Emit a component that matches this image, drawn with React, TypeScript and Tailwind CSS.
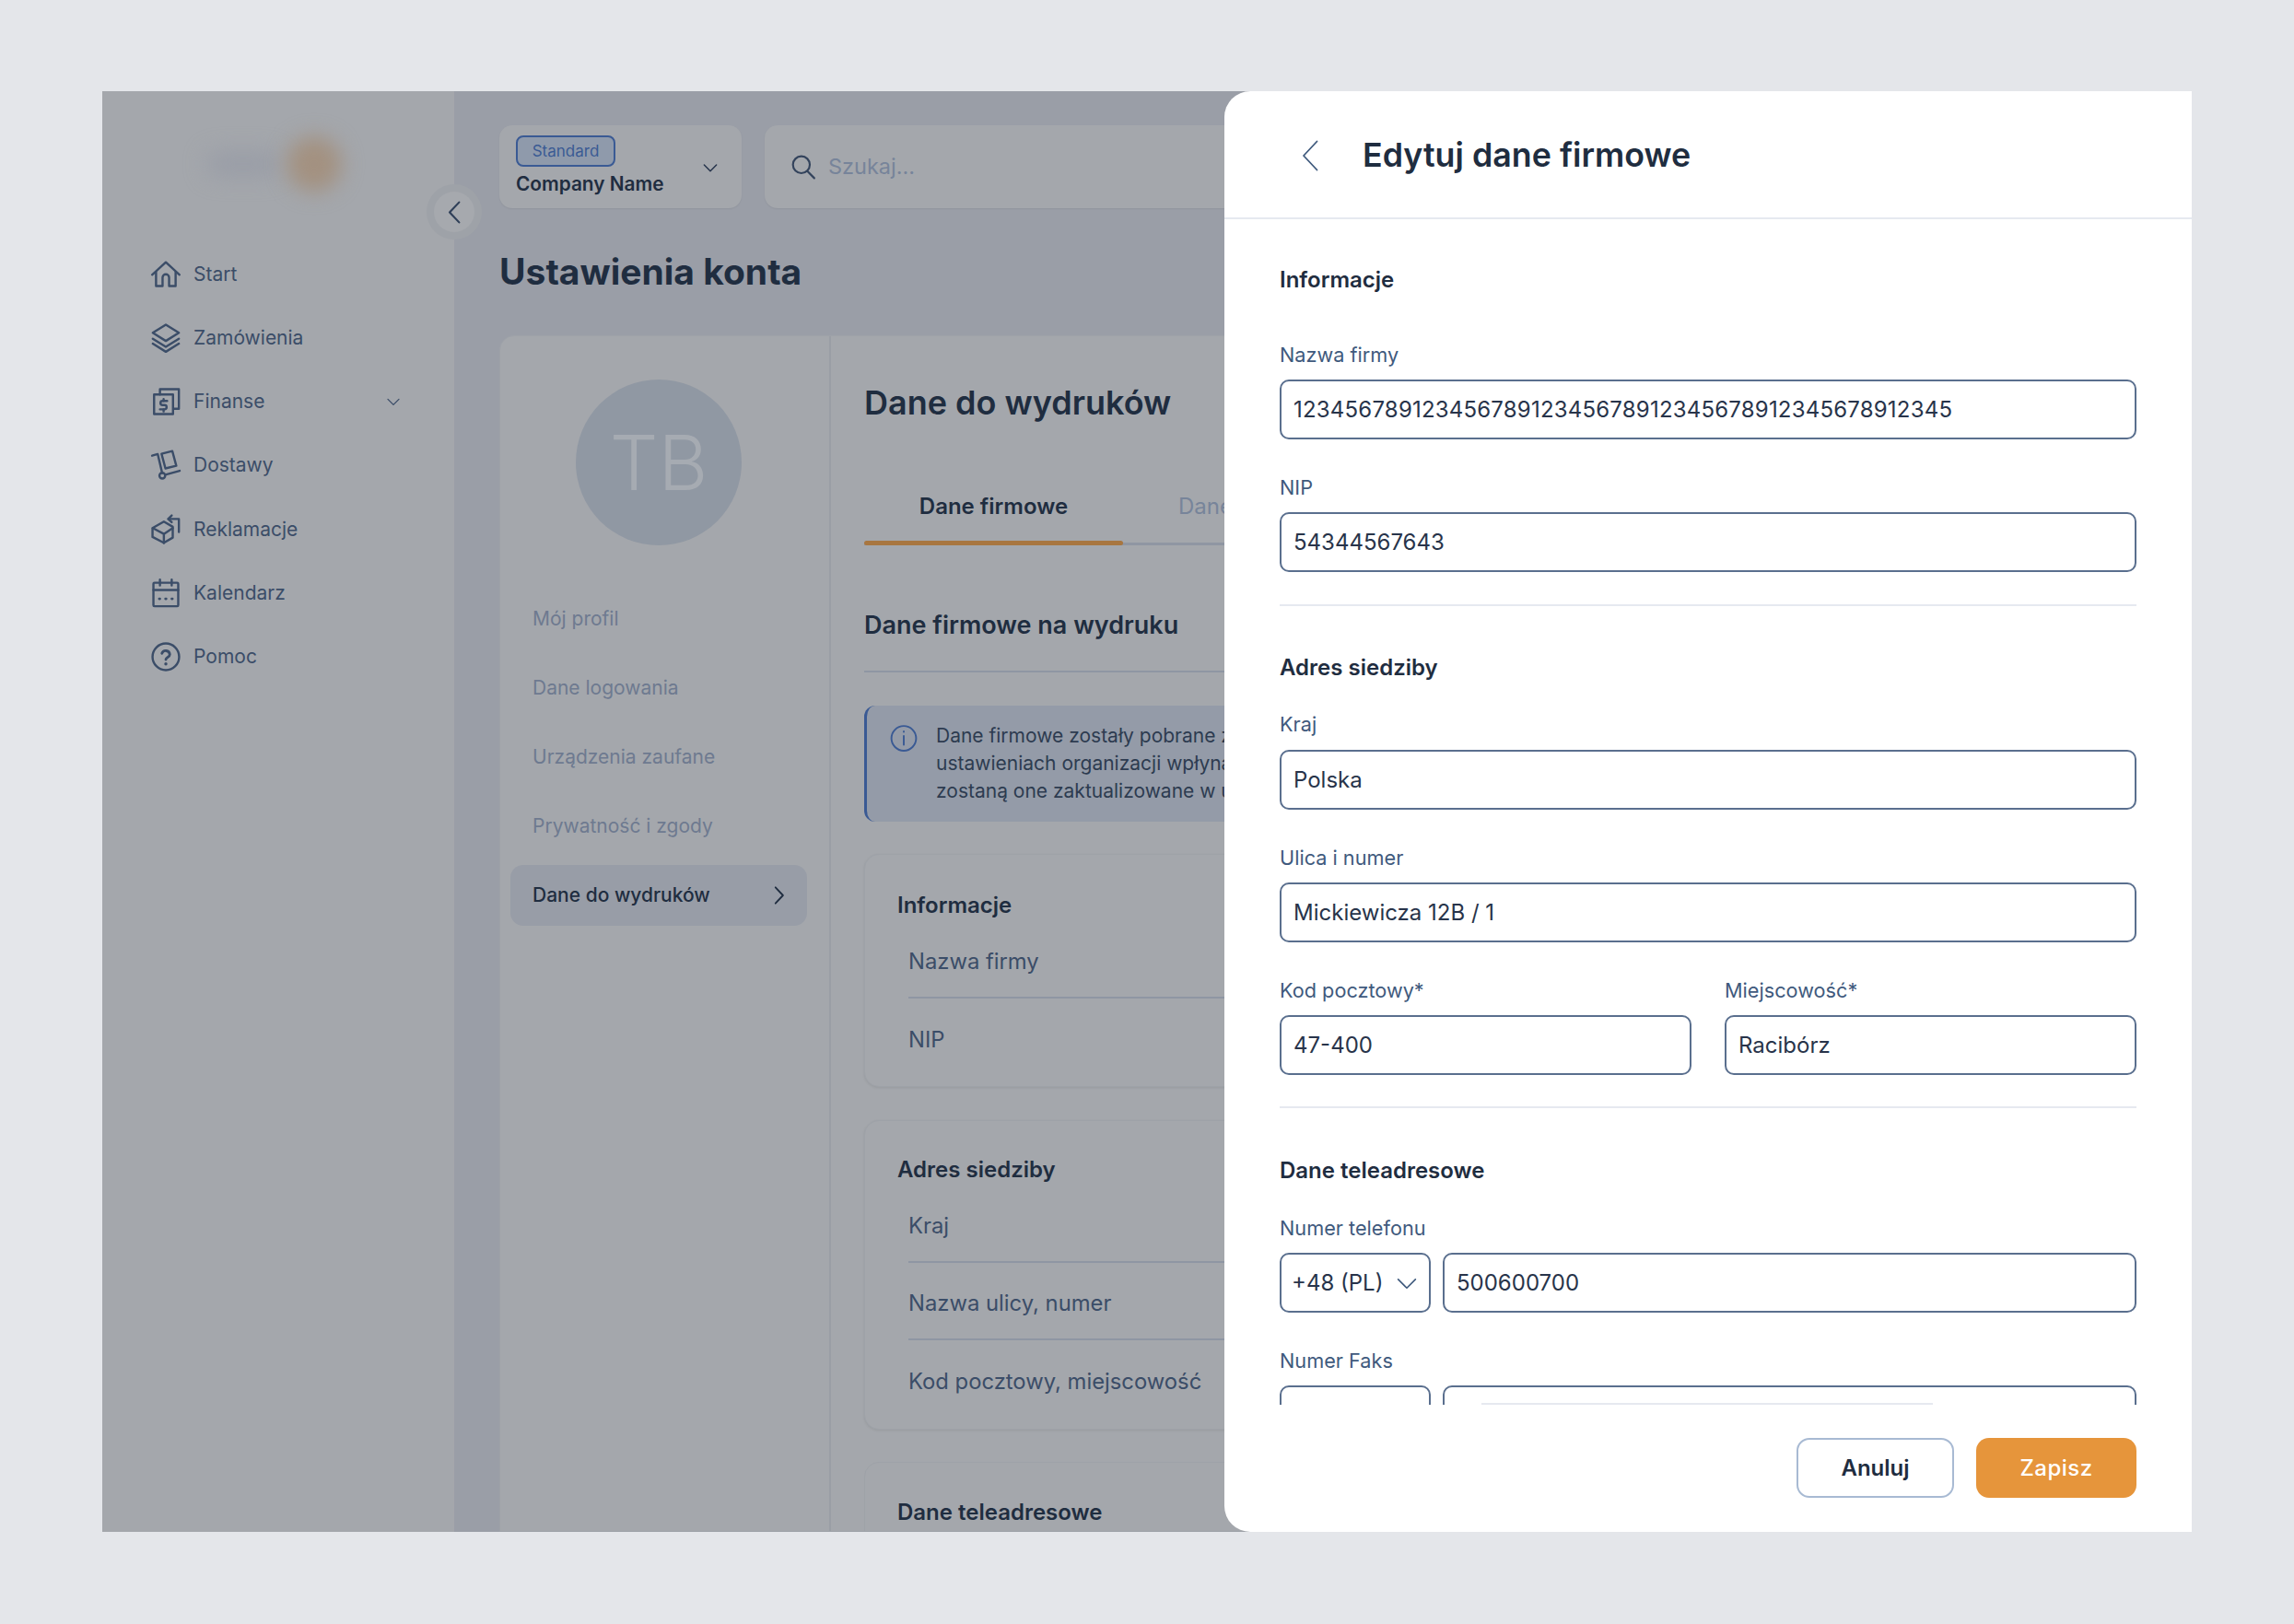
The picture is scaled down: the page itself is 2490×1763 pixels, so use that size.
import React from "react";

const Ico = ({ children, className = "", sw = "1.700" }: { children: React.ReactNode; className?: string; sw?: string }) => (
  <svg viewBox="0 0 24 24" fill="none" stroke="currentColor" strokeWidth={sw} strokeLinecap="round" strokeLinejoin="round" className={className}>
    {children}
  </svg>
);

const size = "w-[34px] h-[34px] shrink-0";

const HomeI = () => (
  <Ico className={size}>
    <path d="M1.5 12.2 12 2.6l10.500 9.600" />
    <path d="M4.500 10.200V20.800h5V14.300a2.500 2.500 0 0 1 5 0v6.500h5V10.200" />
  </Ico>
);
const LayersI = () => (
  <Ico className={size}>
    <path d="M12 1.800 22 8l-10 6.200L2 8z" />
    <path d="M2 12.500l10 6.200 10-6.200" />
    <path d="M2 16.300l10 6.200 10-6.200" />
  </Ico>
);
const FinanceI = () => (
  <Ico className={size}>
    <path d="M7.500 6.500V2.500h14.500v15h-4" />
    <rect x="3" y="6.500" width="14.500" height="15" />
    <path d="M13 11.500h-3.500a1.600 1.600 0 0 0 0 3.200h1.500a1.600 1.600 0 0 1 0 3.200H7.500" />
    <path d="M10.300 10v1.500M10.300 18v1.500" />
  </Ico>
);
const TruckI = () => (
  <Ico className={size}>
    <path d="M1.500 4.700 5.800 3.500 9.200 18" />
    <circle cx="9.300" cy="20" r="2.200" />
    <path d="m11.600 19.300 11-3" />
    <path d="m8.700 3.300 8.300-2.100 3 11.200-8.300 2.100z" />
  </Ico>
);
const BoxI = () => (
  <Ico className={size}>
    <path d="M1.800 12 10.500 7l6.800 4v8.300l-6.800 4-8.700-4.500z" transform="translate(0 -.5)" />
    <path d="m2 11.500 8.500 4.500 6.800-4.500M10.500 16v7" />
    <path d="M14 4.500h8v10" />
    <path d="M16.500 1.800 13.800 4.500 16.500 7" />
  </Ico>
);
const CalI = () => (
  <Ico className={size}>
    <rect x="2.500" y="4" width="19" height="18" rx="0.800" />
    <path d="M2.500 9.500h19M7.500 1.500V6M16.500 1.500V6" />
    <path d="M7 16.300h.4M11.800 16.300h.4M16.600 16.300h.4" strokeWidth="2" />
  </Ico>
);
const HelpI = () => (
  <Ico className={size}>
    <circle cx="12" cy="12" r="10.200" />
    <path d="M9 9.400a3.100 3.100 0 0 1 6 .8c0 2-3 2.500-3 4" strokeWidth="2" />
    <path d="M12 17.500h.01" strokeWidth="2.400" />
  </Ico>
);

const nav: { label: string; icon: React.ReactNode; arrow?: boolean }[] = [
  { label: "Start", icon: <HomeI /> },
  { label: "Zamówienia", icon: <LayersI /> },
  { label: "Finanse", icon: <FinanceI />, arrow: true },
  { label: "Dostawy", icon: <TruckI /> },
  { label: "Reklamacje", icon: <BoxI /> },
  { label: "Kalendarz", icon: <CalI /> },
  { label: "Pomoc", icon: <HelpI /> },
];

const Chevron = ({ dir, className = "", sw }: { dir: "left" | "right" | "down"; className?: string; sw?: string }) => {
  const d = dir === "left" ? "M16 3 7.500 12l8.500 9" : dir === "right" ? "M9 4l7.500 8L9 20" : "M4 8.500l8 8 8-8";
  return (
    <Ico className={className} sw={sw}>
      <path d={d} />
    </Ico>
  );
};

const Sidebar = () => (
  <aside className="w-[382px] shrink-0 bg-[#a4a7ac] text-[#3b4d68]">
    <div className="h-[60px] mt-[49px] mb-[55px] pl-[114px] flex items-center gap-[8px]">
      <div className="w-[78px] h-[24px] rounded-full bg-[#989ca6] blur-[12px]" />
      <div className="w-[60px] h-[60px] rounded-full bg-[#a39180] blur-[11px]" />
    </div>
    <nav className="flex flex-col pl-[53px] pr-[55px]">
      {nav.map((n) => (
        <div key={n.label} className="h-[69.200px] flex items-center">
          <span className="w-[32px] flex justify-center">{n.icon}</span>
          <span className="ml-[14px] text-[21px] flex-1">{n.label}</span>
          {n.arrow && <Chevron dir="down" className="w-[18px] h-[18px] mr-[2px]" />}
        </div>
      ))}
    </nav>
  </aside>
);

const Row = ({ label, line = true }: { label: string; line?: boolean }) => (
  <div className={`h-[84px] pt-[5px] flex items-center text-[23.800px] text-[#3b4d68] ${line ? "border-b-2 border-[#8f96a3]" : ""}`}>{label}</div>
);

const CardTitle = ({ children }: { children: React.ReactNode }) => (
  <h4 className="h-[32px] leading-[32px] text-[24px] font-semibold text-[#1f2d40]">{children}</h4>
);

const MainBg = () => (
  <main className="flex-1 min-w-0 bg-[#9a9ea7] pl-[49px] pr-[40px] pt-[37px] flex flex-col">
    <div className="flex gap-[25px] h-[90px] shrink-0">
      <div className="w-[263px] rounded-[14px] bg-[#a4a7ac] shadow-[0_1px_2px_rgba(0,0,0,0.06)] pl-[18px] pt-[11px] relative">
        <span className="block w-[108px] h-[34px] rounded-[8px] border-2 border-[#3a5a94] bg-[#8f9aab] text-[#3a5a94] text-[17px] leading-[31px] text-center">Standard</span>
        <div className="text-[20.800px] font-semibold text-[#1f2d40] leading-[26px] mt-[6px]">Company Name</div>
        <Chevron dir="down" className="absolute right-[24px] top-[36px] w-[20px] h-[20px] text-[#24324a]" />
      </div>
      <div className="flex-1 rounded-[14px] bg-[#a4a7ac] shadow-[0_1px_2px_rgba(0,0,0,0.06)] flex items-center pl-[28px]">
        <svg viewBox="0 0 26 26" fill="none" stroke="#33435c" strokeWidth="2" strokeLinecap="round" className="w-[28px] h-[28px]">
          <circle cx="11" cy="11" r="8.500" />
          <path d="m17 17.500 7 7" />
        </svg>
        <span className="ml-[13px] text-[23.500px] text-[#77849a]">Szukaj...</span>
      </div>
    </div>
    <h1 className="mt-[46px] h-[46px] leading-[46px] text-[39px] font-bold text-[#1f2d40] shrink-0">Ustawienia konta</h1>
    <div className="mt-[46px] flex-1 min-h-0 flex rounded-t-[16px] bg-[#a4a7ac] border border-[#9ea2a8] overflow-hidden">
      <div className="w-[359px] shrink-0 border-r-2 border-[#9a9ea5] pl-[11px] pr-[24px] pt-[47px]">
        <div className="w-[180px] h-[180px] rounded-full bg-[#9098a3] mx-auto flex items-center justify-center text-[83px] font-light text-[#a6abb2]">TB</div>
        <div className="mt-[47px] flex flex-col gap-[9px] text-[21px] text-[#6e7a90]">
          <div className="h-[66px] flex items-center pl-[24px]">Mój profil</div>
          <div className="h-[66px] flex items-center pl-[24px]">Dane logowania</div>
          <div className="h-[66px] flex items-center pl-[24px]">Urządzenia zaufane</div>
          <div className="h-[66px] flex items-center pl-[24px]">Prywatność i zgody</div>
          <div className="h-[66px] flex items-center justify-between pl-[24px] pr-[18px] rounded-[14px] bg-[#989da7] text-[#1f2d40] font-medium">
            Dane do wydruków
            <Chevron dir="right" className="w-[26px] h-[26px]" />
          </div>
        </div>
      </div>
      <div className="flex-1 min-w-0 pl-[36px] pt-[50px]">
        <h2 className="h-[44px] leading-[44px] text-[36px] font-semibold text-[#1f2d40]">Dane do wydruków</h2>
        <div className="mt-[51px] h-[82px] flex border-b-[3px] border-[#8f96a3]">
          <div className="w-[281px] relative flex items-center justify-center text-[24px] font-semibold text-[#1f2d40]">
            Dane firmowe
            <span className="absolute left-0 right-0 bottom-[-3px] h-[5px] rounded-full bg-[#a87640]" />
          </div>
          <div className="ml-[60px] flex items-center text-[24px] text-[#77849a]">Dane</div>
        </div>
        <h3 className="mt-[69px] h-[36px] leading-[36px] text-[27px] font-semibold text-[#1f2d40]">Dane firmowe na wydruku</h3>
        <div className="mt-[31px] h-[2px] bg-[#8f96a3]" />
        <div className="mt-[36px] h-[126px] rounded-[12px] border-l-[3px] border-[#3a5a94] bg-[#949ba8] flex pl-[25px] pt-[18px] text-[21px] leading-[30px] text-[#2d3b50] whitespace-nowrap overflow-hidden">
          <svg viewBox="0 0 28 28" fill="none" stroke="#3a5a94" strokeWidth="1.800" strokeLinecap="round" className="w-[30px] h-[30px] shrink-0 mt-[2px]">
            <circle cx="14" cy="14.500" r="12.500" />
            <path d="M14 12v9M14 7.500v.5" />
          </svg>
          <div className="ml-[20px]">
            <div>Dane firmowe zostały pobrane z</div>
            <div>ustawieniach organizacji wpłyną</div>
            <div>zostaną one zaktualizowane w u</div>
          </div>
        </div>
        <div className="mt-[35px] h-[253px] rounded-[16px] bg-[#a4a7ac] border border-[#9ea2a8] shadow-[0_1px_3px_rgba(0,0,0,0.08)] pl-[35px] pr-[10px] pt-[39px]">
          <CardTitle>Informacje</CardTitle>
          <div className="ml-[12px] mt-[1px]">
            <Row label="Nazwa firmy" />
            <Row label="NIP" line={false} />
          </div>
        </div>
        <div className="mt-[36px] h-[336px] rounded-[16px] bg-[#a4a7ac] border border-[#9ea2a8] shadow-[0_1px_3px_rgba(0,0,0,0.08)] pl-[35px] pr-[10px] pt-[37px]">
          <CardTitle>Adres siedziby</CardTitle>
          <div className="ml-[12px] mt-[1px]">
            <Row label="Kraj" />
            <Row label="Nazwa ulicy, numer" />
            <Row label="Kod pocztowy, miejscowość" line={false} />
          </div>
        </div>
        <div className="mt-[35px] h-[200px] rounded-[16px] bg-[#a4a7ac] border border-[#9ea2a8] pl-[35px] pt-[38px]">
          <CardTitle>Dane teleadresowe</CardTitle>
        </div>
      </div>
    </div>
  </main>
);

const Label = ({ children, className = "" }: { children: React.ReactNode; className?: string }) => (
  <div className={`h-[30px] leading-[30px] text-[21.700px] text-[#3f5a7d] ${className}`}>{children}</div>
);

const inputCls =
  "block w-full h-[65px] rounded-[10px] border-2 border-[#5a6f8e] bg-white pl-[13px] text-[24px] text-[#28344a] outline-none";

const Field = ({ label, value, className = "", inputClass = "" }: { label: string; value: string; className?: string; inputClass?: string }) => (
  <div className={className}>
    <Label>{label}</Label>
    <input readOnly value={value} className={`${inputCls} mt-[12px] ${inputClass}`} />
  </div>
);

const Heading = ({ children, className = "" }: { children: React.ReactNode; className?: string }) => (
  <h4 className={`h-[32px] leading-[32px] text-[24px] font-semibold text-[#1f2d40] ${className}`}>{children}</h4>
);

const Panel = () => (
  <section className="absolute right-0 top-0 bottom-0 w-[1050px] bg-white rounded-l-[28px] flex flex-col">
    <header className="h-[139px] pt-[3px] shrink-0 border-b-2 border-[#e6e9f0] flex items-center pl-[84px]">
      <svg viewBox="0 0 18 34" fill="none" stroke="#3f5a7d" strokeWidth="1.800" strokeLinecap="round" strokeLinejoin="round" className="w-[18px] h-[34px]">
        <path d="M16.500 1.500 2 17l14.500 15.500" />
      </svg>
      <h2 className="ml-[48px] text-[35.800px] font-semibold text-[#1f2d40]">Edytuj dane firmowe</h2>
    </header>
    <div className="flex-1 min-h-0 overflow-hidden pl-[60px] pr-[60px]">
      <Heading className="mt-[50px]">Informacje</Heading>
      <Field label="Nazwa firmy" value="12345678912345678912345678912345678912345678912345" className="mt-[50px]" inputClass="tracking-[0.2px]" />
      <Field label="NIP" value="54344567643" className="mt-[37px]" />
      <div className="mt-[35px] h-[2px] bg-[#e6e9f0]" />
      <Heading className="mt-[51px]">Adres siedziby</Heading>
      <Label className="mt-[30px]">Kraj</Label>
      <input readOnly value="Polska" className={`${inputCls} mt-[13px]`} />
      <Field label="Ulica i numer" value="Mickiewicza 12B / 1" className="mt-[37px]" />
      <div className="flex gap-[36px] mt-[37px]">
        <Field label="Kod pocztowy*" value="47-400" className="flex-1" />
        <Field label="Miejscowość*" value="Racibórz" className="flex-1" />
      </div>
      <div className="mt-[34px] h-[2px] bg-[#e6e9f0]" />
      <Heading className="mt-[52px]">Dane teleadresowe</Heading>
      <Label className="mt-[31px]">Numer telefonu</Label>
      <div className="flex gap-[13px] mt-[12px]">
        <div className="w-[164px] h-[65px] shrink-0 rounded-[10px] border-2 border-[#5a6f8e] flex items-center justify-between pl-[11px] pr-[10px] text-[24px] text-[#28344a]">
          +48 (PL)
          <Chevron dir="down" className="w-[28px] h-[28px] text-[#3f5a7d]" sw="1.400" />
        </div>
        <input readOnly value="500600700" className={inputCls} />
      </div>
      <Label className="mt-[37px]">Numer Faks</Label>
      <div className="flex gap-[13px] mt-[12px]">
        <div className="w-[164px] h-[65px] shrink-0 rounded-[10px] border-2 border-[#5a6f8e]" />
        <div className="relative flex-1 h-[65px] rounded-[10px] border-2 border-[#5a6f8e]">
          <span className="absolute left-[40px] top-[17px] w-[490px] h-[2px] bg-[#e6e9f0]" />
        </div>
      </div>
    </div>
    <footer className="h-[138px] shrink-0 pt-[36px] pr-[60px] flex justify-end gap-[24px]">
      <button className="w-[171px] h-[65px] rounded-[14px] border-2 border-[#a8bad3] bg-white text-[24px] font-semibold text-[#1f2d40]">Anuluj</button>
      <button className="w-[174px] h-[65px] rounded-[14px] bg-[#e6953b] text-[24px] font-medium text-white tracking-[0.5px]">Zapisz</button>
    </footer>
  </section>
);

export default function App() {
  return (
    <div className="h-[1763px] bg-[#e4e6ea] pt-[99px] pl-[111px] font-['Inter',sans-serif]">
      <div className="relative w-[2268px] h-[1564px] overflow-hidden flex">
        <Sidebar />
        <MainBg />
        <div className="absolute left-[352px] top-[101px] w-[60px] h-[60px] rounded-full bg-[#9ea2a8] flex items-center justify-center">
          <div className="w-[44px] h-[44px] rounded-full bg-[#a6a9ae] flex items-center justify-center text-[#2f3f58]">
            <Chevron dir="left" className="w-[29px] h-[29px]" sw="1.800" />
          </div>
        </div>
        <Panel />
      </div>
    </div>
  );
}
